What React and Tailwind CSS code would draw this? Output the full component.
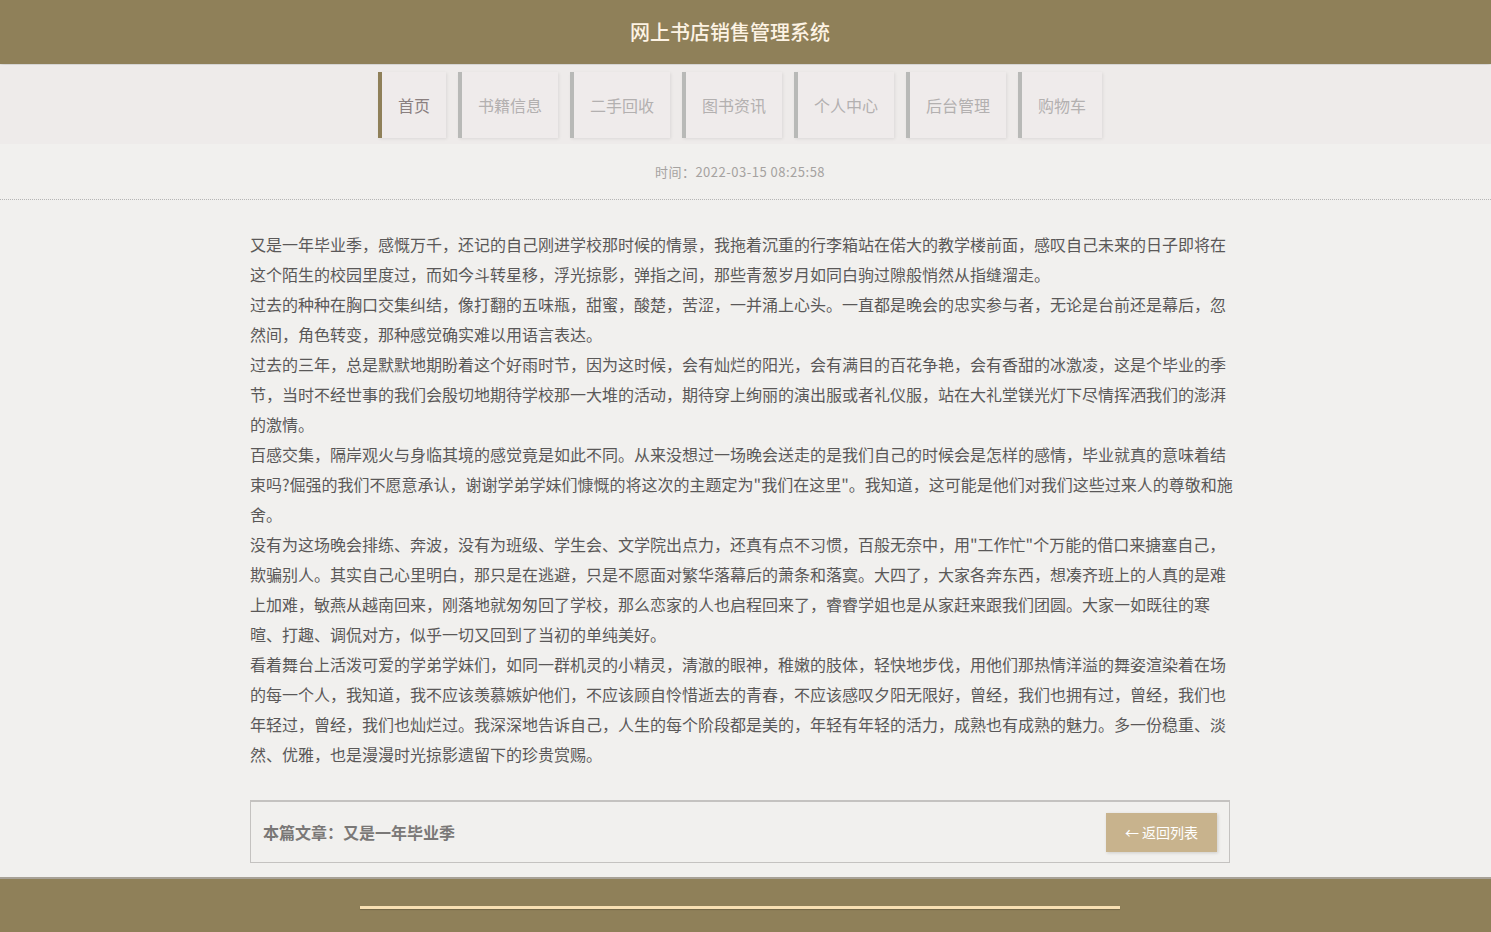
import React from "react";

const navItems = ["首页", "书籍信息", "二手回收", "图书资讯", "个人中心", "后台管理", "购物车"];

const paragraphs = [
  "又是一年毕业季，感慨万千，还记的自己刚进学校那时候的情景，我拖着沉重的行李箱站在偌大的教学楼前面，感叹自己未来的日子即将在这个陌生的校园里度过，而如今斗转星移，浮光掠影，弹指之间，那些青葱岁月如同白驹过隙般悄然从指缝溜走。",
  "过去的种种在胸口交集纠结，像打翻的五味瓶，甜蜜，酸楚，苦涩，一并涌上心头。一直都是晚会的忠实参与者，无论是台前还是幕后，忽然间，角色转变，那种感觉确实难以用语言表达。",
  "过去的三年，总是默默地期盼着这个好雨时节，因为这时候，会有灿烂的阳光，会有满目的百花争艳，会有香甜的冰激凌，这是个毕业的季节，当时不经世事的我们会殷切地期待学校那一大堆的活动，期待穿上绚丽的演出服或者礼仪服，站在大礼堂镁光灯下尽情挥洒我们的澎湃的激情。",
  "百感交集，隔岸观火与身临其境的感觉竟是如此不同。从来没想过一场晚会送走的是我们自己的时候会是怎样的感情，毕业就真的意味着结束吗?倔强的我们不愿意承认，谢谢学弟学妹们慷慨的将这次的主题定为\"我们在这里\"。我知道，这可能是他们对我们这些过来人的尊敬和施舍。",
  "没有为这场晚会排练、奔波，没有为班级、学生会、文学院出点力，还真有点不习惯，百般无奈中，用\"工作忙\"个万能的借口来搪塞自己，欺骗别人。其实自己心里明白，那只是在逃避，只是不愿面对繁华落幕后的萧条和落寞。大四了，大家各奔东西，想凑齐班上的人真的是难上加难，敏燕从越南回来，刚落地就匆匆回了学校，那么恋家的人也启程回来了，睿睿学姐也是从家赶来跟我们团圆。大家一如既往的寒暄、打趣、调侃对方，似乎一切又回到了当初的单纯美好。",
  "看着舞台上活泼可爱的学弟学妹们，如同一群机灵的小精灵，清澈的眼神，稚嫩的肢体，轻快地步伐，用他们那热情洋溢的舞姿渲染着在场的每一个人，我知道，我不应该羡慕嫉妒他们，不应该顾自怜惜逝去的青春，不应该感叹夕阳无限好，曾经，我们也拥有过，曾经，我们也年轻过，曾经，我们也灿烂过。我深深地告诉自己，人生的每个阶段都是美的，年轻有年轻的活力，成熟也有成熟的魅力。多一份稳重、淡然、优雅，也是漫漫时光掠影遗留下的珍贵赏赐。",
];

export default function App() {
  return (
    <div className="min-h-[932px] bg-[#f1f0ee] font-['Noto_Sans_CJK_SC','Noto_Sans',sans-serif]">
      {/* header */}
      <header className="h-16 bg-[#8f8059] shadow-[0_2px_4px_rgba(0,0,0,0.15)]">
        <div className="w-[1480px] h-full flex items-center justify-center pr-5">
          <h1 className="text-[20px] font-medium text-[#fdf3e4]">网上书店销售管理系统</h1>
        </div>
      </header>

      {/* nav */}
      <div className="bg-[#eeebea] h-[79px] mt-px">
        <div className="w-[1480px] flex justify-center gap-3 pt-[7px]">
          {navItems.map((item, i) => (
            <div
              key={item}
              className={`h-[66px] flex items-center px-4 border-l-4 bg-[#efebeb] shadow-[1px_1px_3px_rgba(0,0,0,0.08)] text-[16px] ${
                i === 0 ? "border-[#8f8059] text-[#8a7f7f]" : "border-[#b8b9b7] text-[#b3b0b0]"
              }`}
            >
              {item}
            </div>
          ))}
        </div>
      </div>

      {/* time */}
      <div className="w-[1480px] h-[55px] flex items-center justify-center text-[13px] tracking-[0.5px] text-[#a5a2a0]">
        时间：2022-03-15 08:25:58
      </div>
      <div className="border-t border-dotted border-[#b5b5b5]" />

      {/* article */}
      <div className="w-[1480px]">
        <div className="w-[984px] ml-[250px] pt-[29px] text-[16px] leading-[30px] text-[#5a5858]">
          {paragraphs.map((p, i) => (
            <p key={i}>{p}</p>
          ))}

          <div className="mt-[31px] w-[980px] h-[63px] border border-t-2 border-[#c4c2c0] flex items-center justify-between pl-3 pr-3">
            <span className="text-[16px] font-semibold text-[#7a7877]">本篇文章：又是一年毕业季</span>
            <button className="w-[111px] h-[39px] bg-[#c8b38d] text-white text-[14px] shadow-[1px_1px_3px_rgba(0,0,0,0.15)]">
              ← 返回列表
            </button>
          </div>
        </div>
      </div>

      {/* footer */}
      <footer className="mt-[14px] h-[56px] bg-[#8f8059] border-t-2 border-[#a7a197] flex">
        <div className="w-[1480px] flex justify-center pt-[27px]">
          <div className="w-[760px] h-[3px] bg-[#f8e0b3] shadow-[0_1px_1px_rgba(0,0,0,0.2)]" />
        </div>
      </footer>
    </div>
  );
}
